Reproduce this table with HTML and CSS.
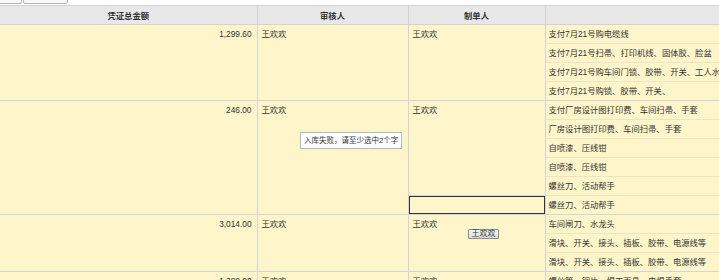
FILE: index.html
```html
<!DOCTYPE html>
<html lang="zh">
<head>
<meta charset="utf-8">
<link rel="stylesheet" href="styles.css">
</head>
<body>
<div class="toolbar">
  <button class="btn b1">删除</button>
  <button class="btn b2">生成凭证</button>
</div>
<div class="grid">
  <table class="tbl">
    <colgroup><col class="c1"><col class="c2"><col class="c3"><col class="c4"></colgroup>
    <thead>
      <tr><th>凭证总金额</th><th>审核人</th><th>制单人</th><th></th></tr>
    </thead>
    <tbody>
      <tr><td rowspan="4" class="amt end">1,299.60</td><td rowspan="4" class="end">王欢欢</td><td rowspan="4" class="end">王欢欢</td><td class="d">支付7月21号购电缆线</td></tr>
      <tr><td class="d">支付7月21号扫帚、打印机线、固体胶、脸盆</td></tr>
      <tr><td class="d">支付7月21号购车间门锁、胶带、开关、工人水杯、电池</td></tr>
      <tr><td class="d end">支付7月21号购锁、胶带、开关、</td></tr>

      <tr><td rowspan="6" class="amt end">246.00</td><td rowspan="6" class="end">王欢欢</td><td rowspan="5">王欢欢</td><td class="d">支付厂房设计图打印费、车间扫帚、手套</td></tr>
      <tr><td class="d">厂房设计图打印费、车间扫帚、手套</td></tr>
      <tr><td class="d">自喷漆、压线钳</td></tr>
      <tr><td class="d">自喷漆、压线钳</td></tr>
      <tr><td class="d">螺丝刀、活动帮手</td></tr>
      <tr><td class="sel end"></td><td class="d end">螺丝刀、活动帮手</td></tr>

      <tr><td rowspan="3" class="amt end">3,014.00</td><td rowspan="3" class="end">王欢欢</td><td rowspan="3" class="end">王欢欢</td><td class="d">车间闸刀、水龙头</td></tr>
      <tr><td class="d">滑块、开关、接头、插板、胶带、电源线等</td></tr>
      <tr><td class="d end">滑块、开关、接头、插板、胶带、电源线等</td></tr>

      <tr><td rowspan="2" class="amt">1,380.00</td><td rowspan="2">王欢欢</td><td rowspan="2">王欢欢</td><td class="d">螺丝管、铜片、焊工面具、电焊手套</td></tr>
      <tr><td class="d">电焊条</td></tr>
    </tbody>
  </table>
  <div class="tip">入库失败，请至少选中2个字</div>
  <button class="chip">王欢欢</button>
</div>
</body>
</html>
```

FILE: styles.css
```css
html, body {
  margin: 0;
  padding: 0;
  background: #ffffff;
  overflow: hidden;
  width: 719px;
  height: 280px;
}
body {
  font-family: "Liberation Sans", "Noto Sans CJK SC", sans-serif;
  font-size: 8.3px;
  color: #333333;
}
.toolbar {
  height: 4px;
  overflow: hidden;
  display: flex;
  align-items: flex-end;
  gap: 1px;
  border-bottom: 1px solid #ffffff;
}
.btn {
  flex: none;
  height: 18px;
  padding: 0 4px;
  border: 1px solid #b4b4b4;
  border-radius: 2px;
  background: #f8f8f8;
  font-family: inherit;
  font-size: 8.5px;
  color: #333;
  line-height: 24px;
  display: flex;
  align-items: flex-end;
  justify-content: center;
}
.b1 { width: 32px; margin-left: -10px; }
.b2 { width: 45px; }
.grid {
  position: relative;
}
.tbl {
  border-collapse: collapse;
  table-layout: fixed;
  width: 820px;
  background: #fef6ca;
}
.c1 { width: 257px; }
.c2 { width: 151px; }
.c3 { width: 137px; }
.c4 { width: 275px; }
.tbl th {
  background: #e8e8e8;
  font-weight: bold;
  text-align: center;
  height: 18px;
  padding: 0;
  border: 1px solid #d2d2d2;
  border-left: none;
  color: #333;
}
.tbl td {
  height: 18px;
  line-height: 18px;
  padding: 0 4px;
  vertical-align: top;
  border: 1px solid #d4d4d4;
  border-left: none;
  white-space: nowrap;
  overflow: hidden;
}
.tbl td.amt {
  text-align: right;
  padding-right: 5px;
}
.tbl td.d {
  border-top: 1px solid #ece4c4;
  border-bottom: 1px solid #ece4c4;
  padding-left: 3px;
}
.tbl td.end {
  border-bottom: 1px solid #d4d4d4;
}
.tbl td.sel {
  box-shadow: inset 0 0 0 1px #333333;
}
.tip {
  position: absolute;
  left: 300px;
  top: 127px;
  height: 15px;
  line-height: 15px;
  padding: 0 3px;
  background: #ffffff;
  border: 1px solid #a9bccf;
  white-space: nowrap;
  font-size: 7.5px;
}
.chip {
  position: absolute;
  left: 468px;
  top: 224px;
  width: 31px;
  height: 10px;
  padding: 0;
  border: 1px solid #8c8c8c;
  border-radius: 1px;
  background: linear-gradient(#f6f6f6, #dadada);
  font-family: inherit;
  font-size: 8px;
  line-height: 8px;
  color: #333;
}
```
